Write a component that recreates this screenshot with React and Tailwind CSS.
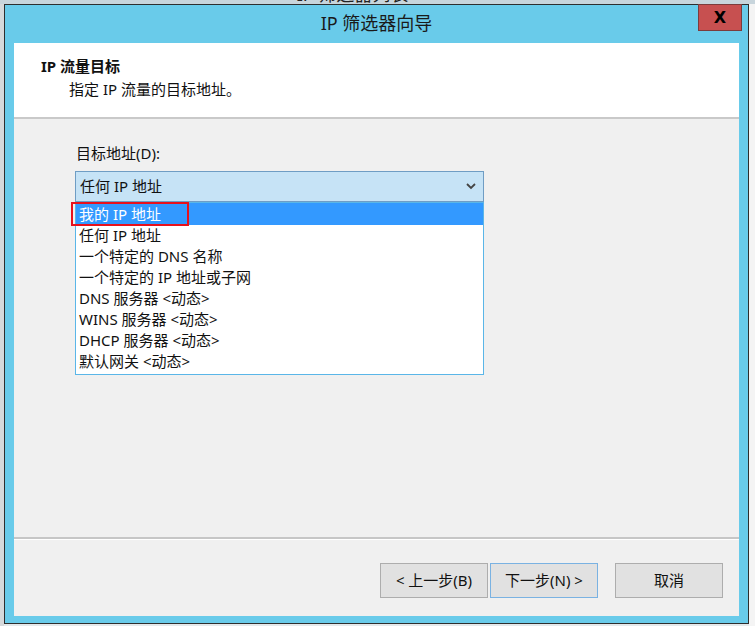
import React from "react";

const font = "font-['Noto_Sans','Noto_Sans_CJK_SC',sans-serif]";

const items = [
  "我的 IP 地址",
  "任何 IP 地址",
  "一个特定的 DNS 名称",
  "一个特定的 IP 地址或子网",
  "DNS 服务器 <动态>",
  "WINS 服务器 <动态>",
  "DHCP 服务器 <动态>",
  "默认网关 <动态>",
];

function Btn({ children, blue }) {
  return (
    <div
      className={`w-[108px] h-[35px] flex items-center justify-center bg-[#e1e1e1] border text-[15px] text-[#111] ${
        blue ? "border-[#7ab2e2]" : "border-[#adadad]"
      }`}
    >
      {children}
    </div>
  );
}

export default function App() {
  return (
    <div className={`w-[755px] h-[626px] bg-[#e4e8ea] overflow-hidden relative ${font}`}>
      {/* background window strip */}
      <div className="h-[4px] bg-[#c8d5dc] overflow-hidden flex justify-center">
        <div className="mt-[-16px] text-[18px] leading-[20px] text-[#222] ml-[-50px]">IP 筛选器列表</div>
      </div>
      <div className="flex">
        <div className="w-[4px] h-[622px] bg-[#d6d9db]" />
        {/* window */}
        <div className="w-[745px] h-[620px] border border-[#2e2e2e] bg-[#69cbea] flex flex-col relative">
          {/* title bar */}
          <div className="h-[38px] flex items-center justify-center text-[18px] text-[#1a1a1a] pb-[2px]">
            IP 筛选器向导
          </div>
          <div className="absolute top-[-1px] left-[693px] w-[44px] h-[27px] bg-[#c75050] border border-[#7c3c3c] flex items-center justify-center text-[16px] font-bold text-black font-['DejaVu_Sans',sans-serif]">
            X
          </div>
          {/* content */}
          <div className="mx-[9px] h-[573px] bg-[#f0f0f0] flex flex-col">
            <div className="h-[76px] bg-white border-b-2 border-[#c9c9c9] pt-[13px] flex flex-col gap-[3px] text-[15px] leading-[20px] text-[#111]">
              <div className="pl-[27px] font-bold">IP 流量目标</div>
              <div className="pl-[55px]">指定 IP 流量的目标地址。</div>
            </div>
            <div className="h-[420px] flex flex-col border-b-2 border-[#c6c6c6] relative">
              <div className="pl-[62px] mt-[24px] text-[15px] leading-[20px] text-[#111]">目标地址(D):</div>
              <div className="ml-[61px] mt-[8px] w-[409px] h-[31px] bg-[#c6e3f6] border border-[#6f9dc4] flex items-center justify-between pl-[4px] pr-[7px] text-[15px] text-[#111]">
                <span>任何 IP 地址</span>
                <svg width="10" height="7" viewBox="0 0 10 7">
                  <path d="M1 1 L5 5 L9 1" fill="none" stroke="#444" strokeWidth="1.8" />
                </svg>
              </div>
              {/* dropdown list overlay */}
              <div className="absolute left-[61px] top-[83px] w-[409px] h-[173px] bg-white border border-[#5ab6e8] flex flex-col text-[15px] text-[#111]">
                {items.map((t, i) => (
                  <div
                    key={i}
                    className={`h-[21px] leading-[21px] pl-[3px] whitespace-pre ${
                      i === 0 ? "bg-[#3399ff] text-white h-[22px] leading-[22px]" : ""
                    }`}
                  >
                    {t}
                  </div>
                ))}
              </div>
              <div className="absolute left-[57px] top-[83px] w-[118px] h-[24px] border-2 border-[#e8111c]" />
            </div>
            <div className="h-px bg-white" />
            <div className="flex-1 flex items-start pt-[23px] pl-[366px]">
              <Btn>&lt; 上一步(B)</Btn>
              <div className="w-[2px]" />
              <Btn blue>下一步(N) &gt;</Btn>
              <div className="w-[17px]" />
              <Btn>取消</Btn>
            </div>
          </div>
        </div>
        <div className="flex-1 bg-[#f4f4f4]" />
      </div>
    </div>
  );
}
